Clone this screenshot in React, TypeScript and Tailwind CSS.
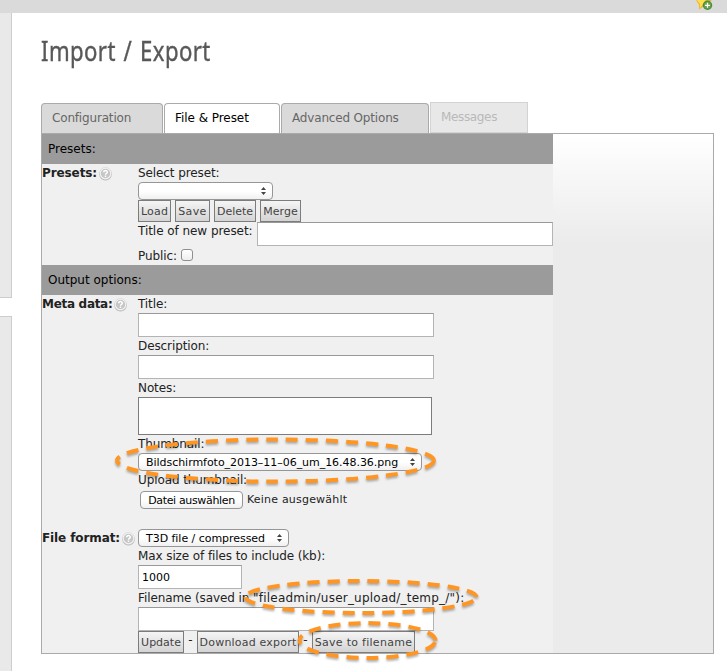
import type { ReactNode } from 'react';

const sans = "font-['DejaVu_Sans','Liberation_Sans',sans-serif]";

function HelpIcon() {
  return (
    <svg width="13" height="14" viewBox="0 0 13 14" className="shrink-0">
      <circle cx="6.5" cy="7.3" r="6.2" fill="#b4b4b4" />
      <circle cx="6.5" cy="6.5" r="6" fill="#f6f6f6" stroke="#d2d2d2" strokeWidth="0.6" />
      <circle cx="6.5" cy="6.5" r="4.700" fill="#c6c6c6" />
      <path d="M4.700 5.300c0-2.300 3.600-2.300 3.600-.1 0 1.200-1.800 1.200-1.800 2.500M6.500 8.600v1.400" fill="none" stroke="#fff" strokeWidth="1.500" />
    </svg>
  );
}

function Label({ children, className = 'tracking-[-0.1px]' }: { children: ReactNode; className?: string }) {
  return <div className={`h-[18px] whitespace-nowrap text-[12px] leading-[18px] text-[#222] ${className}`}>{children}</div>;
}

function TextField({ className = 'w-[296px]', value = '' }: { className?: string; value?: string }) {
  return (
    <input
      readOnly
      value={value}
      className={`block h-6 border border-[#b4b4b4] border-t-[#999] bg-white px-[3px] text-[11px] text-black ${className}`}
    />
  );
}

function SelectBox({ className, children }: { className: string; children?: ReactNode }) {
  return (
    <div
      className={`flex h-[18px] items-center justify-between whitespace-nowrap rounded-[4px] border border-[#969696] bg-linear-to-b from-white from-50% to-[#f0f0f0] pr-[6px] pl-[7px] text-[11px] tracking-[-0.04px] text-black ${className}`}
    >
      <span className="pt-[2px] leading-[14px]">{children}</span>
      <svg width="5" height="8" viewBox="0 0 5 8" className="shrink-0">
        <path d="M2.500 0 5 3H0zM2.500 8 0 5h5z" fill="#444" />
      </svg>
    </div>
  );
}

function FlatButton({ className, children }: { className: string; children: ReactNode }) {
  return (
    <button
      className={`flex h-[22px] shrink-0 items-center justify-center whitespace-nowrap border border-[#7c7c7c] bg-linear-to-b from-[#f5f5f5] to-[#d4d4d4] pt-[2px] text-[11px] text-[#434343] ${className}`}
    >
      {children}
    </button>
  );
}

function SectionHeader({ children }: { children: ReactNode }) {
  return <div className="h-[30px] bg-[#9b9b9b] pl-[6px] text-[12px] leading-[30px] text-black">{children}</div>;
}

function RowTitle({ children, className = 'tracking-[-0.1px]' }: { children: ReactNode; className?: string }) {
  return (
    <div className={`flex h-[18px] w-24 shrink-0 gap-[2px] whitespace-nowrap text-[12px] leading-[18px] font-bold text-[#222] ${className}`}>
      {children}
      <span className="pt-[3px]">
        <HelpIcon />
      </span>
    </div>
  );
}

function Marker({ cx, cy, rx, ry, lower = 0 }: { cx: number; cy: number; rx: number; ry: number; lower?: number }) {
  const start = `M${cx + rx} ${cy}`;
  const end = `${cx - rx} ${cy}`;
  return (
    <g fill="none" stroke="#ff9623" strokeWidth="4" strokeDasharray="12 8">
      <path d={`${start}A${rx} ${ry} 0 0 0 ${end}`} />
      <path d={`${start}A${rx} ${ry} 0 0 1 ${end}`} strokeDashoffset={-lower} />
    </g>
  );
}

export default function App() {
  return (
    <div className={`relative h-[671px] w-[727px] overflow-hidden bg-white ${sans}`}>
      <div className="flex h-[13px] justify-end bg-[#dadada] pr-[14px]">
        <svg width="18" height="11" viewBox="0 0 18 11">
          <path d="M1 0h16l-6 5-7 4.500V5z" fill="#f2b72c" />
          <path d="M2 0h9L5 8V4z" fill="#ffe14d" />
          <circle cx="12.500" cy="5.300" r="4.700" fill="#4c8c35" />
          <circle cx="12.500" cy="5.300" r="3.500" fill="#67a54d" />
          <path d="M12.500 2.800v5M10 5.300h5" stroke="#fff" strokeWidth="1.200" />
        </svg>
      </div>

      <div className="flex h-[658px]">
        <div className="flex w-3 shrink-0 flex-col gap-[18px]">
          <div className="h-[285px] border-r border-b border-[#cdcdcd] bg-[#e9e9e9]" />
          <div className="flex-1 border-t border-r border-[#cdcdcd] bg-[#e9e9e9]" />
        </div>

        <div className="ml-[29px] w-[673px]">
          <h1 className="h-[89px] origin-left scale-x-[0.82] pt-[19px] font-['Noto_Sans',sans-serif] text-[27px] leading-[38px] tracking-[0.5px] whitespace-nowrap text-[#585858] [word-spacing:2px] [-webkit-text-stroke:0.4px_#585858]">
            Import / Export
          </h1>

          <div className="flex h-[31px] items-end gap-px text-[12px] tracking-[-0.17px] text-[#666]">
            <div className="h-[30px] w-[122px] rounded-t-[4px] border border-b-0 border-[#aaa] bg-[#dadada] pl-[10px] leading-[29px]">
              Configuration
            </div>
            <div className="h-[30px] w-[116px] rounded-t-[4px] border border-b-0 border-[#aaa] bg-white pl-[10px] leading-[29px] tracking-[-0.05px] text-black">
              File &amp; Preset
            </div>
            <div className="h-[30px] w-[148px] rounded-t-[4px] border border-b-0 border-[#aaa] bg-[#dadada] pl-[10px] leading-[29px]">
              Advanced Options
            </div>
            <div className="h-[31px] w-[98px] border border-[#d3d3d3] bg-[#e8e8e8] pl-[10px] leading-[28px] tracking-[-0.35px] text-[#b9b9b9]">
              Messages
            </div>
          </div>

          <div className="h-[521px] border border-[#aaa] bg-linear-to-b from-white to-[#ebebeb] to-[110px]">
            <div className="h-[519px] w-[511px] bg-[#f0f0f0]">
              <SectionHeader>Presets:</SectionHeader>
              <div className="flex h-[101px]">
                <RowTitle>Presets:</RowTitle>
                <div>
                  <Label>Select preset:</Label>
                  <SelectBox className="w-[135px]" />
                  <div className="flex gap-1">
                    <FlatButton className="w-[33px] tracking-[0.2px]">Load</FlatButton>
                    <FlatButton className="w-[35px] tracking-[0.4px]">Save</FlatButton>
                    <FlatButton className="w-[42px]">Delete</FlatButton>
                    <FlatButton className="w-[41px]">Merge</FlatButton>
                  </div>
                  <div className="flex h-6 w-[415px] justify-between">
                    <Label className="tracking-[-0.05px]">Title of new preset:</Label>
                    <TextField />
                  </div>
                  <div className="flex gap-[4px] pt-[1px]">
                    <Label>Public:</Label>
                    <input
                      type="checkbox"
                      className="mt-[2px] size-3 appearance-none rounded-[3px] border border-[#8e8e8e] bg-linear-to-b from-white to-[#eee]"
                    />
                  </div>
                </div>
              </div>

              <SectionHeader>Output options:</SectionHeader>
              <div className="flex h-[234px]">
                <RowTitle className="tracking-[-0.3px]">Meta data:</RowTitle>
                <div>
                  <Label>Title:</Label>
                  <TextField />
                  <Label>Description:</Label>
                  <TextField />
                  <Label>Notes:</Label>
                  <textarea readOnly className="block h-[38px] w-[294px] resize-none border border-[#7c7c7c] bg-white" />
                  <Label>Thumbnail:</Label>
                  <SelectBox className="w-[284px]">Bildschirmfoto_2013–11–06_um_16.48.36.png</SelectBox>
                  <Label>Upload thumbnail:</Label>
                  <div className="flex items-center gap-1 pt-[2px] pl-[2px] text-[11px]">
                    <button className="h-[18px] w-[103px] rounded-[4px] border border-[#969696] bg-linear-to-b from-white from-50% to-[#f0f0f0] leading-[17px] tracking-[-0.35px] whitespace-nowrap text-black">
                      Datei auswählen
                    </button>
                    <span className="leading-[16px] tracking-[0.2px] text-[#222]">Keine ausgewählt</span>
                  </div>
                </div>
              </div>

              <div className="flex h-[124px]">
                <RowTitle>File format:</RowTitle>
                <div>
                  <SelectBox className="w-[151px]">T3D file / compressed</SelectBox>
                  <Label>Max size of files to include (kb):</Label>
                  <TextField className="w-[104px]" value="1000" />
                  <Label className="tracking-[0.12px]">
                    <span className="tracking-[-0.1px]">Filename (saved in </span>
                    <span className="tracking-[0.22px]">"fileadmin/user_upload/_temp_/"):</span>
                  </Label>
                  <TextField />
                  <div className="flex text-[12px] leading-[18px] text-[#222]">
                    <FlatButton className="w-[46px]">Update</FlatButton>
                    <span className="w-[13px] text-center">-</span>
                    <FlatButton className="w-[102px] tracking-[0.2px]">Download export</FlatButton>
                    <span className="w-[13px] text-center">-</span>
                    <FlatButton className="w-[103px] tracking-[0.28px]">Save to filename</FlatButton>
                  </div>
                </div>
              </div>
            </div>
          </div>
        </div>
      </div>

      <svg width="727" height="671" viewBox="0 0 727 671" className="pointer-events-none absolute inset-0 drop-shadow-[0_2px_1px_rgba(0,0,0,0.3)]">
        <Marker cx={275.500} cy={460.500} rx={158.500} ry={21} />
        <Marker cx={361} cy={597} rx={115.500} ry={16} lower={5} />
        <Marker cx={367.500} cy={640.500} rx={68} ry={17.400} lower={2} />
      </svg>
    </div>
  );
}
